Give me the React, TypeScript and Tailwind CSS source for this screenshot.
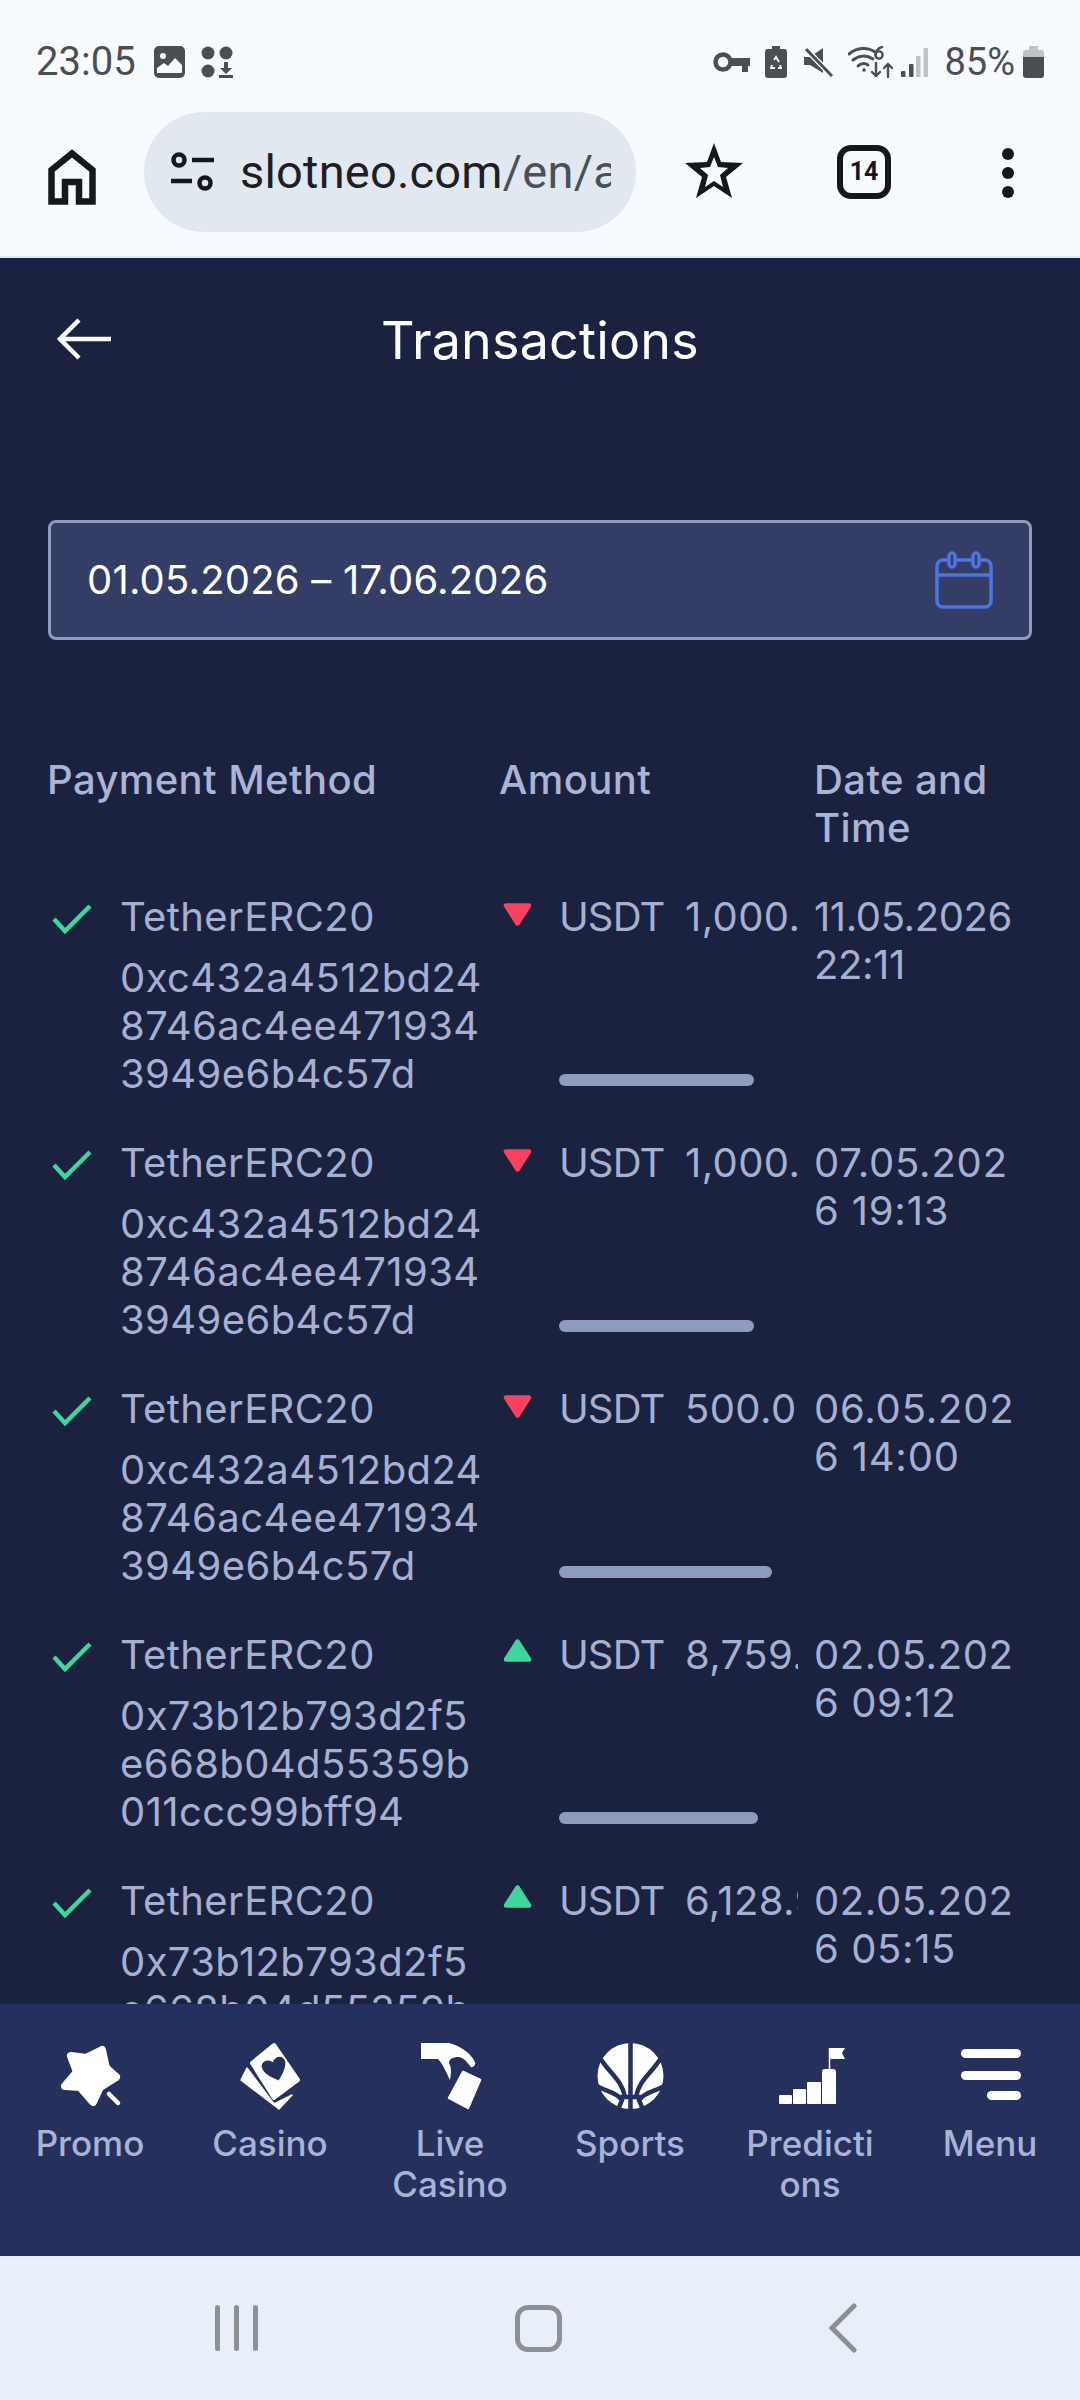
const font = { fontFamily: '"Inter", "Liberation Sans", sans-serif' };
const rows = [
  { addr: ["0xc432a4512bd24", "8746ac4ee471934", "3949e6b4c57d"], amt: "1,000.00", up: false, bar: "w-[195px]", date: ["11.05.2026", "22:11"], dateClass: "tracking-[-0.4px]" },
  { addr: ["0xc432a4512bd24", "8746ac4ee471934", "3949e6b4c57d"], amt: "1,000.00", up: false, bar: "w-[195px]", date: ["07.05.202", "6 19:13"], dateClass: "tracking-[0.8px]" },
  { addr: ["0xc432a4512bd24", "8746ac4ee471934", "3949e6b4c57d"], amt: "500.0000", up: false, bar: "w-[213px]", date: ["06.05.202", "6 14:00"], dateClass: "tracking-[0.8px]" },
  { addr: ["0x73b12b793d2f5", "e668b04d55359b", "011ccc99bff94"], amt: "8,759.00", up: true, bar: "w-[199px]", date: ["02.05.202", "6 09:12"], dateClass: "tracking-[0.6px]" },
  { addr: ["0x73b12b793d2f5", "e668b04d55359b", "011ccc99bff94"], amt: "6,128.90", up: true, bar: "w-[199px]", date: ["02.05.202", "6 05:15"], dateClass: "tracking-[0.6px]" },
];

function StatusLeft() {
  return (
    <div className="flex items-center">
      <span className="text-[40px] leading-[44px] text-[#4b4f54]" style={{ fontFamily: "Roboto, sans-serif" }}>23:05</span>
      <svg className="ml-[18px]" width="31" height="32" viewBox="0 0 31 32">
        <rect width="31" height="32" rx="5" fill="#4b4f54" />
        <circle cx="9" cy="10" r="3" fill="#f7faff" />
        <path d="M3 27 V22 L10 17 L14 20 L21 12 L28 19 V26 a1 1 0 0 1 -1 1 Z" fill="#f7faff" />
      </svg>
      <svg className="ml-[16px]" width="32" height="32" viewBox="0 0 32 32" fill="#4b4f54">
        <circle cx="7" cy="7" r="6.5" />
        <circle cx="25" cy="7" r="6.5" />
        <circle cx="7" cy="25" r="6.5" />
        <path d="M23 16 h4 v6 h4 l-6 6 l-6 -6 h4 Z" />
        <rect x="18" y="29" width="14" height="3" />
      </svg>
    </div>
  );
}

function StatusRight() {
  return (
    <div className="flex items-center">
      <svg width="37" height="22" viewBox="0 0 37 22" fill="none">
        <circle cx="10" cy="11" r="7.5" stroke="#4b4f54" stroke-width="4.500" />
        <path d="M17 7 H37 V15 H35 V21 H29 V15 H17 Z" fill="#4b4f54" />
      </svg>
      <svg className="ml-[15px]" width="22" height="32" viewBox="0 0 22 32">
        <path d="M7 0 h8 v3 h4 a3 3 0 0 1 3 3 v23 a3 3 0 0 1 -3 3 h-16 a3 3 0 0 1 -3 -3 v-23 a3 3 0 0 1 3 -3 h4 Z" fill="#4b4f54" />
        <path d="M9 14 L11 11 L14 16 M7 19 L6 22 H10 M13 22 H16 L15 19" stroke="#f7faff" stroke-width="1.800" fill="none" />
      </svg>
      <svg className="ml-[17px]" width="29" height="30" viewBox="0 0 29 30">
        <path d="M0 10 H6 L19 1 V26 L6 18 H0 Z" fill="#4b4f54" />
        <path d="M2 2 L28 29" stroke="#f7faff" stroke-width="5.500" />
        <path d="M2 2 L28 29" stroke="#4b4f54" stroke-width="3" />
      </svg>
      <svg className="ml-[15px]" width="45" height="32" viewBox="0 0 45 32" fill="none" stroke="#4b4f54" stroke-width="3" stroke-linecap="round">
        <path d="M1 8 C9 1 20 1 27 6" />
        <path d="M5 14 C11 9 19 9 25 13" />
        <path d="M10 20 C13 17 17 17 20 19" />
        <circle cx="16" cy="24" r="1.8" fill="#4b4f54" stroke="none" />
        <circle cx="31" cy="9" r="3.600" stroke-width="2.400" />
        <path d="M34 1 C30 2 28 5 27.5 9" stroke-width="2.400" />
        <path d="M28 17 V30 M24 26 L28 30 L32 26" stroke-width="2.400" />
        <path d="M40 31 V18 M36 22 L40 18 L44 22" stroke-width="2.400" />
      </svg>
      <svg className="ml-[8px]" width="27" height="30" viewBox="0 0 27 30">
        <rect x="0" y="24" width="4.500" height="6" rx="1" fill="#4b4f54" />
        <rect x="8" y="17" width="4.500" height="13" rx="1" fill="#4b4f54" />
        <rect x="15" y="9" width="4.500" height="21" rx="1" fill="#bfc3c8" />
        <rect x="22.500" y="1" width="4.500" height="29" rx="1" fill="#bfc3c8" />
      </svg>
      <span className="ml-[16px] text-[38px] leading-[44px] text-[#4b4f54]" style={{ fontFamily: "Roboto, sans-serif" }}>85%</span>
      <svg className="ml-[8px]" width="21" height="32" viewBox="0 0 21 32">
        <path d="M6 0 h9 v4 h3 a3 3 0 0 1 3 3 v4 H0 v-4 a3 3 0 0 1 3 -3 h3 Z" fill="#bfc3c8" />
        <path d="M0 11 H21 V29 a3 3 0 0 1 -3 3 H3 a3 3 0 0 1 -3 -3 Z" fill="#4b4f54" />
      </svg>
    </div>
  );
}

function ChromeBar() {
  return (
    <div className="flex items-start h-[146px] border-b-2 border-[#e2e8f0]">
      <div className="w-[144px] flex justify-center pt-[37px]">
        <svg width="48" height="56" viewBox="0 0 48 56" fill="none" stroke="#14181c" stroke-width="6.500">
          <path d="M3.500 52.500 V21 L24 4.500 L44.500 21 V52.500 H31 V33 H17 V52.500 Z" />
        </svg>
      </div>
      <div className="w-[492px] h-[120px] rounded-full bg-[#e2e8f0] flex items-center pl-[26px] overflow-hidden">
        <svg width="44" height="40" viewBox="0 0 44 40" fill="none" stroke="#14181c" stroke-width="4.500" className="shrink-0">
          <circle cx="9" cy="8" r="5.500" />
          <path d="M22 8 H44 M1 29 H22" />
          <circle cx="35" cy="31" r="5.500" />
        </svg>
        <div className="ml-[26px] w-[371px] overflow-hidden whitespace-nowrap text-[47px] leading-[56px] text-[#1c2024] tracking-[0.2px]" style={{ fontFamily: "Roboto, sans-serif" }}>
          slotneo.com<span className="text-[#4a5058]">/en/account</span>
        </div>
      </div>
      <div className="w-[98px] pl-[49px] pt-[31px]">
        <svg width="58" height="56" viewBox="0 0 58 56">
          <path fill="#14181c" fill-rule="evenodd" d="M29 0 L36 19 L58 20 L41 34 L47 55 L29 43 L11 55 L17 34 L0 20 L22 19 Z M29 14 L33 24 L43 25 L35 32 L38 44 L29 38 L20 44 L23 32 L15 25 L25 24 Z" />
        </svg>
      </div>
      <div className="ml-[103px] mt-[33px] w-[54px] h-[54px] rounded-[14px] border-[6px] border-[#14181c] flex items-center justify-center text-[25px] font-bold text-[#14181c]" style={{ fontFamily: "Roboto, sans-serif" }}>14</div>
      <div className="ml-[111px] mt-[36px] flex flex-col gap-[7px]">
        <div className="w-[12px] h-[12px] rounded-full bg-[#14181c]" />
        <div className="w-[12px] h-[12px] rounded-full bg-[#14181c]" />
        <div className="w-[12px] h-[12px] rounded-full bg-[#14181c]" />
      </div>
    </div>
  );
}

function Row({ r }: { r: (typeof rows)[number] }) {
  return (
    <div className="-ml-[1px] grid grid-cols-[452px_315px_217px] mb-[41px] text-[40px] leading-[48px] text-[#a7b0d1] tracking-[0.4px]">
      <div className="flex">
        <svg width="73" height="48" viewBox="0 0 73 48" fill="none" className="shrink-0">
          <path d="M7 26 L18 38 L43 13" stroke="#3fd69b" stroke-width="4.500" />
        </svg>
        <div>
          <div className="mb-[13px]">TetherERC20</div>
          {r.addr.map((a) => <div key={a}>{a}</div>)}
        </div>
      </div>
      <div className="flex">
        <div className="w-[60px] shrink-0 pl-[4px]">
          {r.up ? (
            <svg width="29" height="23" viewBox="0 0 29 23" className="mt-[8px]"><path d="M14.500 2.500 L26 20.500 H3 Z" fill="#3fd69b" stroke="#3fd69b" stroke-width="4.500" stroke-linejoin="round" /></svg>
          ) : (
            <svg width="29" height="23" viewBox="0 0 29 23" className="mt-[10px]"><path d="M3 2.500 H26 L14.500 20.500 Z" fill="#f8415f" stroke="#f8415f" stroke-width="4.500" stroke-linejoin="round" /></svg>
          )}
        </div>
        <div className="w-[239px] flex flex-col justify-between overflow-hidden">
          <div className="flex whitespace-nowrap">
            <span className="w-[126px] shrink-0 tracking-[-0.9px]">USDT</span>
            <span>{r.amt}</span>
          </div>
          <div className={`${r.bar} h-[12px] rounded-full bg-[#8f9bbd] mb-[12px]`} />
        </div>
      </div>
      <div className={r.dateClass}>
        {r.date.map((d) => <div key={d}>{d}</div>)}
      </div>
    </div>
  );
}

const bg = "#26305c";
const navItems = [
  {
    label: ["Promo"],
    icon: (
      <>
        <path d="M21 16 L36 18 L52 10 L56 28 L66 37 L50 47 L43 62 L30 47 L15 46 L27 32 Z" fill="#fff" stroke="#fff" stroke-width="8" stroke-linejoin="round" />
        <path d="M59 54 L68 63" stroke={bg} stroke-width="8" />
        <path d="M59 54 L68 63" stroke="#fff" stroke-width="4.500" stroke-linecap="round" />
      </>
    ),
  },
  {
    label: ["Casino"],
    icon: (
      <>
        <path d="M44 5 L68 40 L44 58 L22 23 Z" fill="#fff" stroke="#fff" stroke-width="4" stroke-linejoin="round" />
        <path d="M17 28 L11 40 L49 69 L62 55 L44 64 Z" fill="#fff" stroke="#fff" stroke-width="1.500" stroke-linejoin="round" />
        <path transform="rotate(-18 45 29)" d="M45 41 C39 36 33 30 33 24 C33 18 41 16 45 22 C49 16 57 18 57 24 C57 30 51 36 45 41 Z" fill={bg} />
      </>
    ),
  },
  {
    label: ["Live", "Casino"],
    icon: (
      <>
        <path d="M11 3 H39 C50 6 60 12 65 22 C66 25 63 28 61 27 C57 22 54 18 49 17 C43 17 39 19 39 23 C42 28 41 34 40 40 C36 32 33 24 28 19 L11 19 Z" fill="#fff" />
        <path d="M53 32 L70 40 L58 68 L39 58 Z" fill="#fff" stroke="#fff" stroke-width="2.500" stroke-linejoin="round" />
      </>
    ),
  },
  {
    label: ["Sports"],
    icon: (
      <>
        <circle cx="40.500" cy="36" r="33" fill="#fff" />
        <g stroke={bg} stroke-width="4.500" fill="none">
          <path d="M40.500 0 V72" />
          <path d="M10 18 C20 34 32 40 35 57 M71 18 C61 34 49 40 46 57" />
          <path d="M4 44 C14 52 24 50 32 60 L27 72 M77 44 C67 52 57 50 49 60 L54 72" />
          <path d="M30 57 H51" />
        </g>
      </>
    ),
  },
  {
    label: ["Predicti", "ons"],
    icon: (
      <>
        <rect x="9" y="55" width="13" height="9" fill="#fff" rx="1" />
        <rect x="23" y="49" width="13" height="15" fill="#fff" rx="1" />
        <rect x="37" y="42" width="14" height="22" fill="#fff" rx="1" />
        <path d="M52 32 a3 3 0 0 1 3 -3 h8 a3 3 0 0 1 3 3 V64 H52 Z" fill="#fff" />
        <path d="M59.500 29 V8" stroke="#fff" stroke-width="1.500" />
        <path d="M59 8 H75 L72 13 L75 19 H59 Z" fill="#fff" />
      </>
    ),
  },
  {
    label: ["Menu"],
    icon: (
      <>
        <rect x="11" y="9" width="60" height="9" rx="4.500" fill="#fff" />
        <rect x="11" y="31" width="60" height="9" rx="4.500" fill="#fff" />
        <rect x="37" y="51" width="34" height="9" rx="4.500" fill="#fff" />
      </>
    ),
  },
];

export default function App() {
  return (
    <div className="w-[1080px] h-[2400px] flex flex-col bg-[#1a2240] overflow-hidden" style={font}>
      <div className="bg-[#f7faff] shrink-0">
        <div className="h-[112px] flex items-start justify-between pl-[36px] pr-[36px] pt-[40px]">
          <StatusLeft />
          <StatusRight />
        </div>
        <ChromeBar />
      </div>

      <main className="flex-1 min-h-0 overflow-hidden px-[48px]">
        <div className="h-[164px] flex items-center relative justify-center -mx-[48px] pt-[2px]">
          <svg className="absolute left-[57px] top-[60px]" width="54" height="42" viewBox="0 0 54 42" fill="none" stroke="#fff" stroke-width="4.500">
            <path d="M54 21 H3 M22 2 L3 21 L22 40" />
          </svg>
          <h1 className="text-[52px] leading-[60px] text-white tracking-[0.2px] font-normal">Transactions</h1>
        </div>
        <div className="mt-[98px] h-[120px] rounded-[8px] border-[3px] border-[#8f9bbd] bg-[#343d66] flex items-center justify-between pl-[36px] pr-[36px]">
          <span className="text-[40px] leading-[48px] text-white tracking-[0.2px]">01.05.2026 – 17.06.2026</span>
          <svg width="58" height="58" viewBox="0 0 58 58" fill="none" stroke="#4e74e0" stroke-width="3.500">
            <rect x="2" y="9" width="54" height="47" rx="6" />
            <path d="M2 24 H56" />
            <rect x="14" y="2" width="6" height="14" rx="3" fill="#343d66" />
            <rect x="38" y="2" width="6" height="14" rx="3" fill="#343d66" />
          </svg>
        </div>
        <div className="-ml-[1px] mt-[116px] grid grid-cols-[452px_315px_217px] text-[40px] leading-[48px] font-medium text-[#abb4d4] tracking-[0.4px] mb-[41px]">
          <div>Payment Method</div>
          <div>Amount</div>
          <div>Date and<br />Time</div>
        </div>
        {rows.map((r, i) => <Row key={i} r={r} />)}
      </main>

      <nav className="h-[252px] shrink-0 bg-[#26305c] grid grid-cols-6 pt-[36px]">
        {navItems.map((n) => (
          <div key={n.label[0]} className="flex flex-col items-center">
            <svg width="80" height="72" viewBox="0 0 80 72">{n.icon}</svg>
            <div className="mt-[11px] text-center text-[35px] leading-[41px] font-medium text-[#a9b3d6]">
              {n.label.map((l) => <div key={l}>{l}</div>)}
            </div>
          </div>
        ))}
      </nav>

      <div className="h-[144px] shrink-0 bg-[#e8eff8] flex items-center">
        <div className="ml-[215px] flex gap-[14px]">
          <div className="w-[5px] h-[46px] rounded-full bg-[#8d9196]" />
          <div className="w-[5px] h-[46px] rounded-full bg-[#8d9196]" />
          <div className="w-[5px] h-[46px] rounded-full bg-[#8d9196]" />
        </div>
        <div className="ml-[257px] w-[47px] h-[47px] rounded-[13px] border-[5px] border-[#8d9196]" />
        <svg className="ml-[266px]" width="30" height="50" viewBox="0 0 30 50" fill="none" stroke="#8d9196" stroke-width="5" stroke-linecap="round">
          <path d="M26 3 L4 25 L26 47" />
        </svg>
      </div>
    </div>
  );
}
